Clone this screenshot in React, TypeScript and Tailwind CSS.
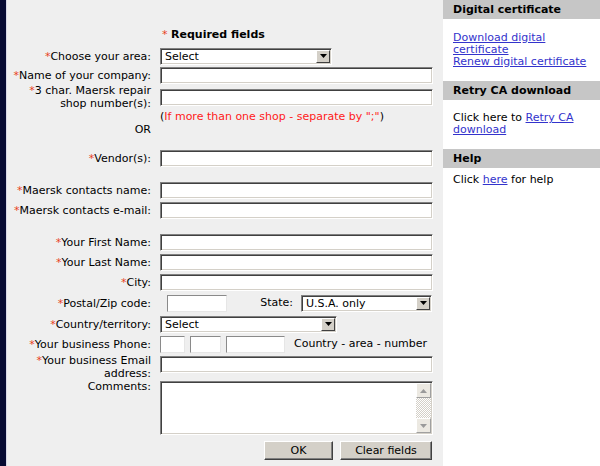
import React from 'react';

const inputCls =
  'block h-[17px] bg-white border border-t-[#808080] border-l-[#808080] border-b-white border-r-white shadow-[inset_1px_1px_0_#404040,inset_-1px_-1px_0_#d4d0c8] outline-none px-[3px] text-[11px]';

const thinInputCls =
  'block h-[17px] bg-white border border-t-[#8a8a8a] border-l-[#8a8a8a] border-b-[#e6e6e6] border-r-[#e6e6e6] outline-none px-[3px] text-[11px]';

const Star: React.FC = () => <span className="text-[#e8401c]">*</span>;

const Arrow: React.FC<{ up?: boolean; color?: string }> = ({ up, color = '#000' }) => (
  <svg width="7" height="4" viewBox="0 0 7 4">
    <path d={up ? 'M0 4h7L3.5 0z' : 'M0 0h7L3.5 4z'} fill={color} />
  </svg>
);

const DropButton: React.FC = () => (
  <span className="flex w-[14px] h-full items-center justify-center bg-[#d4d0c8] border border-t-white border-l-white border-b-[#404040] border-r-[#404040]">
    <Arrow />
  </span>
);

const FakeSelect: React.FC<{ value: string; className: string }> = ({ value, className }) => (
  <div
    className={`flex h-[17px] p-[1px] bg-white border border-t-[#808080] border-l-[#808080] border-b-white border-r-white shadow-[inset_1px_1px_0_#404040,inset_-1px_-1px_0_#d4d0c8] ${className}`}
  >
    <span className="flex-1 pl-[3px] leading-[13px]">{value}</span>
    <DropButton />
  </div>
);

const Label: React.FC<{ children: React.ReactNode }> = ({ children }) => (
  <div className="w-[145px] shrink-0 text-right leading-[13px] pr-[1px]">{children}</div>
);

const Row: React.FC<{ className: string; label?: React.ReactNode; children?: React.ReactNode }> = ({
  className,
  label,
  children,
}) => (
  <div className={`flex ${className}`}>
    <Label>{label}</Label>
    <div className="ml-[8px] w-[273px] flex items-center">{children}</div>
  </div>
);

const ScrollBtn: React.FC<{ up?: boolean }> = ({ up }) => (
  <span className="flex h-[15px] w-[15px] items-center justify-center bg-[#ece9e2] border border-t-white border-l-white border-b-[#a0a0a0] border-r-[#a0a0a0]">
    <Arrow up={up} color="#9a9a9a" />
  </span>
);

const WinButton: React.FC<{ className: string; children: React.ReactNode }> = ({ className, children }) => (
  <button
    className={`h-[19px] bg-[#d4d0c8] border border-t-white border-l-white border-b-[#404040] border-r-[#404040] shadow-[inset_-1px_-1px_0_#808080] text-[11px] leading-[15px] text-black ${className}`}
  >
    {children}
  </button>
);

const App: React.FC = () => {
  return (
    <div className="flex h-[466px] w-[600px] overflow-hidden font-['DejaVu_Sans',Verdana,sans-serif] text-[11px] text-black">
      <div className="w-[6px] bg-[#070a32]" />
      <div className="w-[1px] bg-[#d8d8e6]" />

      {/* form */}
      <div className="w-[436px] bg-[#efefef] flex flex-col pt-[28px]">
        <div className="flex h-[14px] items-center">
          <div className="ml-[154px] pl-[1px]">
            <span className="text-[#e8401c]">*</span>{' '}
            <span className="font-bold">Required fields</span>
          </div>
        </div>

        <Row className="mt-[4px] h-[20px] items-center" label={<><Star />Choose your area:</>}>
          <FakeSelect value="Select" className="w-[172px]" />
        </Row>
        <Row className="h-[18px] items-center" label={<><Star />Name of your company:</>}>
          <input className={`${inputCls} w-[273px]`} />
        </Row>
        <Row
          className="h-[26px] items-center"
          label={
            <>
              <Star />3 char. Maersk repair
              <br />
              shop number(s):
            </>
          }
        >
          <input className={`${inputCls} w-[273px]`} />
        </Row>
        <Row className="h-[13px] items-center">
          <span className="leading-[13px]">
            (<span className="text-[#ff1a1a]">If more than one shop - separate by ";"</span>)
          </span>
        </Row>
        <Row className="h-[13px] items-center" label="OR" />

        <Row className="mt-[12px] h-[20px] items-center" label={<><Star />Vendor(s):</>}>
          <input className={`${inputCls} w-[273px]`} />
        </Row>

        <Row className="mt-[12px] h-[20px] items-center" label={<><Star />Maersk contacts name:</>}>
          <input className={`${inputCls} w-[273px]`} />
        </Row>
        <Row className="h-[20px] items-center" label={<><Star />Maersk contacts e-mail:</>}>
          <input className={`${inputCls} w-[273px]`} />
        </Row>

        <Row className="mt-[12px] h-[20px] items-center" label={<><Star />Your First Name:</>}>
          <input className={`${inputCls} w-[273px]`} />
        </Row>
        <Row className="h-[20px] items-center" label={<><Star />Your Last Name:</>}>
          <input className={`${inputCls} w-[273px]`} />
        </Row>
        <Row className="h-[20px] items-center" label={<><Star />City:</>}>
          <input className={`${inputCls} w-[273px]`} />
        </Row>
        <Row className="h-[22px] items-center" label={<><Star />Postal/Zip code:</>}>
          <input className={`${thinInputCls} ml-[7px] w-[60px]`} />
          <div className="flex-1" />
          <span>State:</span>
          <FakeSelect value="U.S.A. only" className="ml-[8px] mr-[1px] w-[131px]" />
        </Row>
        <Row className="h-[20px] items-center" label={<><Star />Country/territory:</>}>
          <FakeSelect value="Select" className="w-[177px]" />
        </Row>
        <Row className="h-[20px] items-center" label={<><Star />Your business Phone:</>}>
          <input className={`${thinInputCls} w-[25px]`} />
          <input className={`${thinInputCls} ml-[5px] w-[31px]`} />
          <input className={`${thinInputCls} ml-[5px] w-[59px]`} />
          <span className="ml-[9px] whitespace-nowrap">Country - area - number</span>
        </Row>
        <div className="flex h-[26px] items-start">
          <Label>
            <Star />Your business Email
            <br />
            address:
          </Label>
          <div className="ml-[8px] w-[273px] pt-[2px]">
            <input className={`${inputCls} w-[273px]`} />
          </div>
        </div>
        <div className="flex h-[57px] items-start">
          <Label>Comments:</Label>
          <div className="ml-[8px] pt-[1px]">
            <div className="flex h-[54px] w-[273px] p-[1px] bg-white border border-t-[#808080] border-l-[#808080] border-b-white border-r-white shadow-[inset_1px_1px_0_#404040,inset_-1px_-1px_0_#d4d0c8]">
              <textarea className="flex-1 resize-none bg-transparent outline-none px-[2px] text-[11px]" />
              <div className="flex w-[15px] flex-col">
                <ScrollBtn up />
                <div className="flex-1 bg-[repeating-conic-gradient(#d4d0c8_0_25%,#ffffff_0_50%)] bg-[length:2px_2px]" />
                <ScrollBtn />
              </div>
            </div>
          </div>
        </div>
        <div className="flex">
          <div className="w-[145px] shrink-0" />
          <div className="ml-[8px] mt-[4px] flex w-[273px] justify-end gap-[7px] pr-[1px]">
            <WinButton className="w-[69px]">OK</WinButton>
            <WinButton className="w-[92px]">Clear fields</WinButton>
          </div>
        </div>
      </div>

      {/* side panel */}
      <div className="w-[157px] bg-white leading-[12px]">
        <div className="h-[19px] bg-[#c6c6c6] pl-[10px] font-bold leading-[19px]">Digital certificate</div>
        <div className="pl-[10px] pr-[8px] pt-[13px] pb-[13px]">
          <a href="#" className="text-[#3333cc] underline">Download digital certificate</a>
          <br />
          <a href="#" className="text-[#3333cc] underline">Renew digital certificate</a>
        </div>
        <div className="h-[19px] bg-[#c6c6c6] pl-[10px] font-bold leading-[19px]">Retry CA download</div>
        <div className="pl-[10px] pr-[8px] pt-[12px] pb-[13px]">
          Click here to <a href="#" className="text-[#3333cc] underline">Retry CA download</a>
        </div>
        <div className="h-[19px] bg-[#c6c6c6] pl-[10px] font-bold leading-[19px]">Help</div>
        <div className="pl-[10px] pr-[8px] pt-[6px]">
          Click <a href="#" className="text-[#3333cc] underline">here</a> for help
        </div>
      </div>
    </div>
  );
};

export default App;
